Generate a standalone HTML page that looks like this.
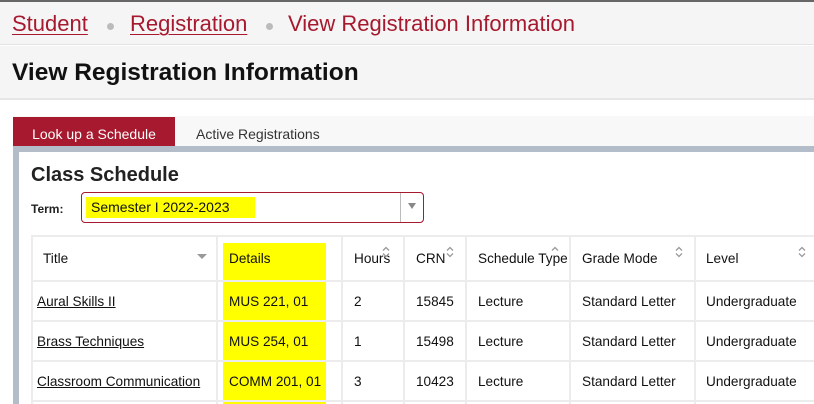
<!DOCTYPE html>
<html><head><style>
*{margin:0;padding:0;box-sizing:border-box}
html,body{overflow:hidden}
body{width:814px;height:404px;background:#fff;font-family:"Liberation Sans",Arial,sans-serif;position:relative}
.abs{position:absolute}
.crumb{top:0;left:0;width:814px;height:45px;background:#f5f5f5;border-top:2px solid #666;border-bottom:1px solid #e4e4e4}
.crumb span{position:absolute;top:9px;font-size:22px;color:#a6192e}
.crumb u{text-decoration:underline;text-underline-offset:3px;text-decoration-thickness:1px}
.dot{width:7px;height:7px;border-radius:50%;background:#bbb;top:21px}
.title{top:46px;left:0;width:814px;height:54px;background:#f5f5f5;border-bottom:2px solid #e6e6e6}
.title span{position:absolute;left:12px;top:13px;font-size:24.5px;font-weight:bold;color:#111}
.tabs{top:116px;left:13px;width:801px;height:30px;background:#f8f8f8}
.tab1{top:117px;left:13px;width:162px;height:30px;background:#a6192e;color:#fff;font-size:14px;line-height:34px;text-align:center}
.tab2{top:117px;left:196px;font-size:14px;line-height:34px;color:#333}
.panel{top:146px;left:13px;width:801px;height:258px;border-top:6px solid #b3bdca;border-left:6px solid #b3bdca;background:#fff}
.h{top:164px;left:31px;font-size:20px;font-weight:bold;color:#222}
.term{top:202px;left:31px;font-size:12px;font-weight:bold;color:#222}
.sel{top:192px;left:81px;width:343px;height:31px;border:1px solid #a6192e;border-radius:4px}
.sel .y{position:absolute;left:4px;top:4px;width:169px;height:21px;background:#ff0;font-size:14px;line-height:21px;padding-left:5px;color:#111}
.sel .sep{position:absolute;right:22px;top:0;width:1px;height:29px;background:#bbb}
.sel .ar{position:absolute;right:7px;top:10px;border-left:4px solid transparent;border-right:4px solid transparent;border-top:6px solid #888}
.hl{position:absolute;left:31px;width:783px;height:2px;background:#ececec}
.vl{position:absolute;top:235px;width:2px;height:169px;background:#ececec}
.c{position:absolute;font-size:13.6px;color:#111;white-space:nowrap}
.c a{color:#111;text-decoration:underline}
.yl{position:absolute;background:#ff0}
.s{position:absolute;width:8px;height:12px}
</style></head><body>
<div class="abs crumb">
<span style="left:12px"><u>Student</u></span>
<div class="abs dot" style="left:107px"></div>
<span style="left:130px"><u>Registration</u></span>
<div class="abs dot" style="left:266px"></div>
<span style="left:288px">View Registration Information</span>
</div>
<div class="abs title"><span>View Registration Information</span></div>
<div class="abs tabs"></div>
<div class="abs tab1">Look up a Schedule</div>
<div class="abs tab2">Active Registrations</div>
<div class="abs panel"></div>
<div class="abs h">Class Schedule</div>
<div class="abs term">Term:</div>
<div class="abs sel"><div class="y">Semester I 2022-2023</div><div class="sep"></div><div class="ar"></div></div>

<div class="yl" style="left:223px;top:243px;width:103px;height:161px"></div>
<div class="hl" style="top:235px"></div>
<div class="hl" style="top:280px"></div>
<div class="hl" style="top:320px"></div>
<div class="hl" style="top:360px"></div>
<div class="hl" style="top:400px"></div>
<div class="vl" style="left:31px"></div>
<div class="vl" style="left:216px"></div>
<div class="vl" style="left:341px"></div>
<div class="vl" style="left:403px"></div>
<div class="vl" style="left:465px"></div>
<div class="vl" style="left:569px"></div>
<div class="vl" style="left:694px"></div>

<div class="c" style="left:43px;top:251px">Title</div>
<div class="abs" style="left:197px;top:254px;border-left:5px solid transparent;border-right:5px solid transparent;border-top:5px solid #999"></div>
<div class="c" style="left:229px;top:251px">Details</div>
<div class="c" style="left:354px;top:251px">Hours</div>
<svg class="s" style="left:382px;top:246px" viewBox="0 0 8 12"><path d="M1 4.5L4 1.5L7 4.5M1 7.5L4 10.5L7 7.5" fill="none" stroke="#999" stroke-width="1.3"/></svg>
<div class="c" style="left:416px;top:251px">CRN</div>
<svg class="s" style="left:446px;top:246px" viewBox="0 0 8 12"><path d="M1 4.5L4 1.5L7 4.5M1 7.5L4 10.5L7 7.5" fill="none" stroke="#999" stroke-width="1.3"/></svg>
<div class="c" style="left:478px;top:251px">Schedule Type</div>
<svg class="s" style="left:551px;top:246px" viewBox="0 0 8 12"><path d="M1 4.5L4 1.5L7 4.5" fill="none" stroke="#999" stroke-width="1.3"/></svg>
<div class="c" style="left:582px;top:251px">Grade Mode</div>
<svg class="s" style="left:675px;top:246px" viewBox="0 0 8 12"><path d="M1 4.5L4 1.5L7 4.5M1 7.5L4 10.5L7 7.5" fill="none" stroke="#999" stroke-width="1.3"/></svg>
<div class="c" style="left:706px;top:251px">Level</div>
<svg class="s" style="left:798px;top:246px" viewBox="0 0 8 12"><path d="M1 4.5L4 1.5L7 4.5M1 7.5L4 10.5L7 7.5" fill="none" stroke="#999" stroke-width="1.3"/></svg>

<div class="c" style="left:37px;top:294px"><a>Aural Skills II</a></div>
<div class="c" style="left:229px;top:294px">MUS 221, 01</div>
<div class="c" style="left:354px;top:294px">2</div>
<div class="c" style="left:416px;top:294px">15845</div>
<div class="c" style="left:478px;top:294px">Lecture</div>
<div class="c" style="left:582px;top:294px">Standard Letter</div>
<div class="c" style="left:706px;top:294px">Undergraduate</div>

<div class="c" style="left:37px;top:334px"><a>Brass Techniques</a></div>
<div class="c" style="left:229px;top:334px">MUS 254, 01</div>
<div class="c" style="left:354px;top:334px">1</div>
<div class="c" style="left:416px;top:334px">15498</div>
<div class="c" style="left:478px;top:334px">Lecture</div>
<div class="c" style="left:582px;top:334px">Standard Letter</div>
<div class="c" style="left:706px;top:334px">Undergraduate</div>

<div class="c" style="left:37px;top:374px"><a>Classroom Communication</a></div>
<div class="c" style="left:229px;top:374px">COMM 201, 01</div>
<div class="c" style="left:354px;top:374px">3</div>
<div class="c" style="left:416px;top:374px">10423</div>
<div class="c" style="left:478px;top:374px">Lecture</div>
<div class="c" style="left:582px;top:374px">Standard Letter</div>
<div class="c" style="left:706px;top:374px">Undergraduate</div>
</body></html>
